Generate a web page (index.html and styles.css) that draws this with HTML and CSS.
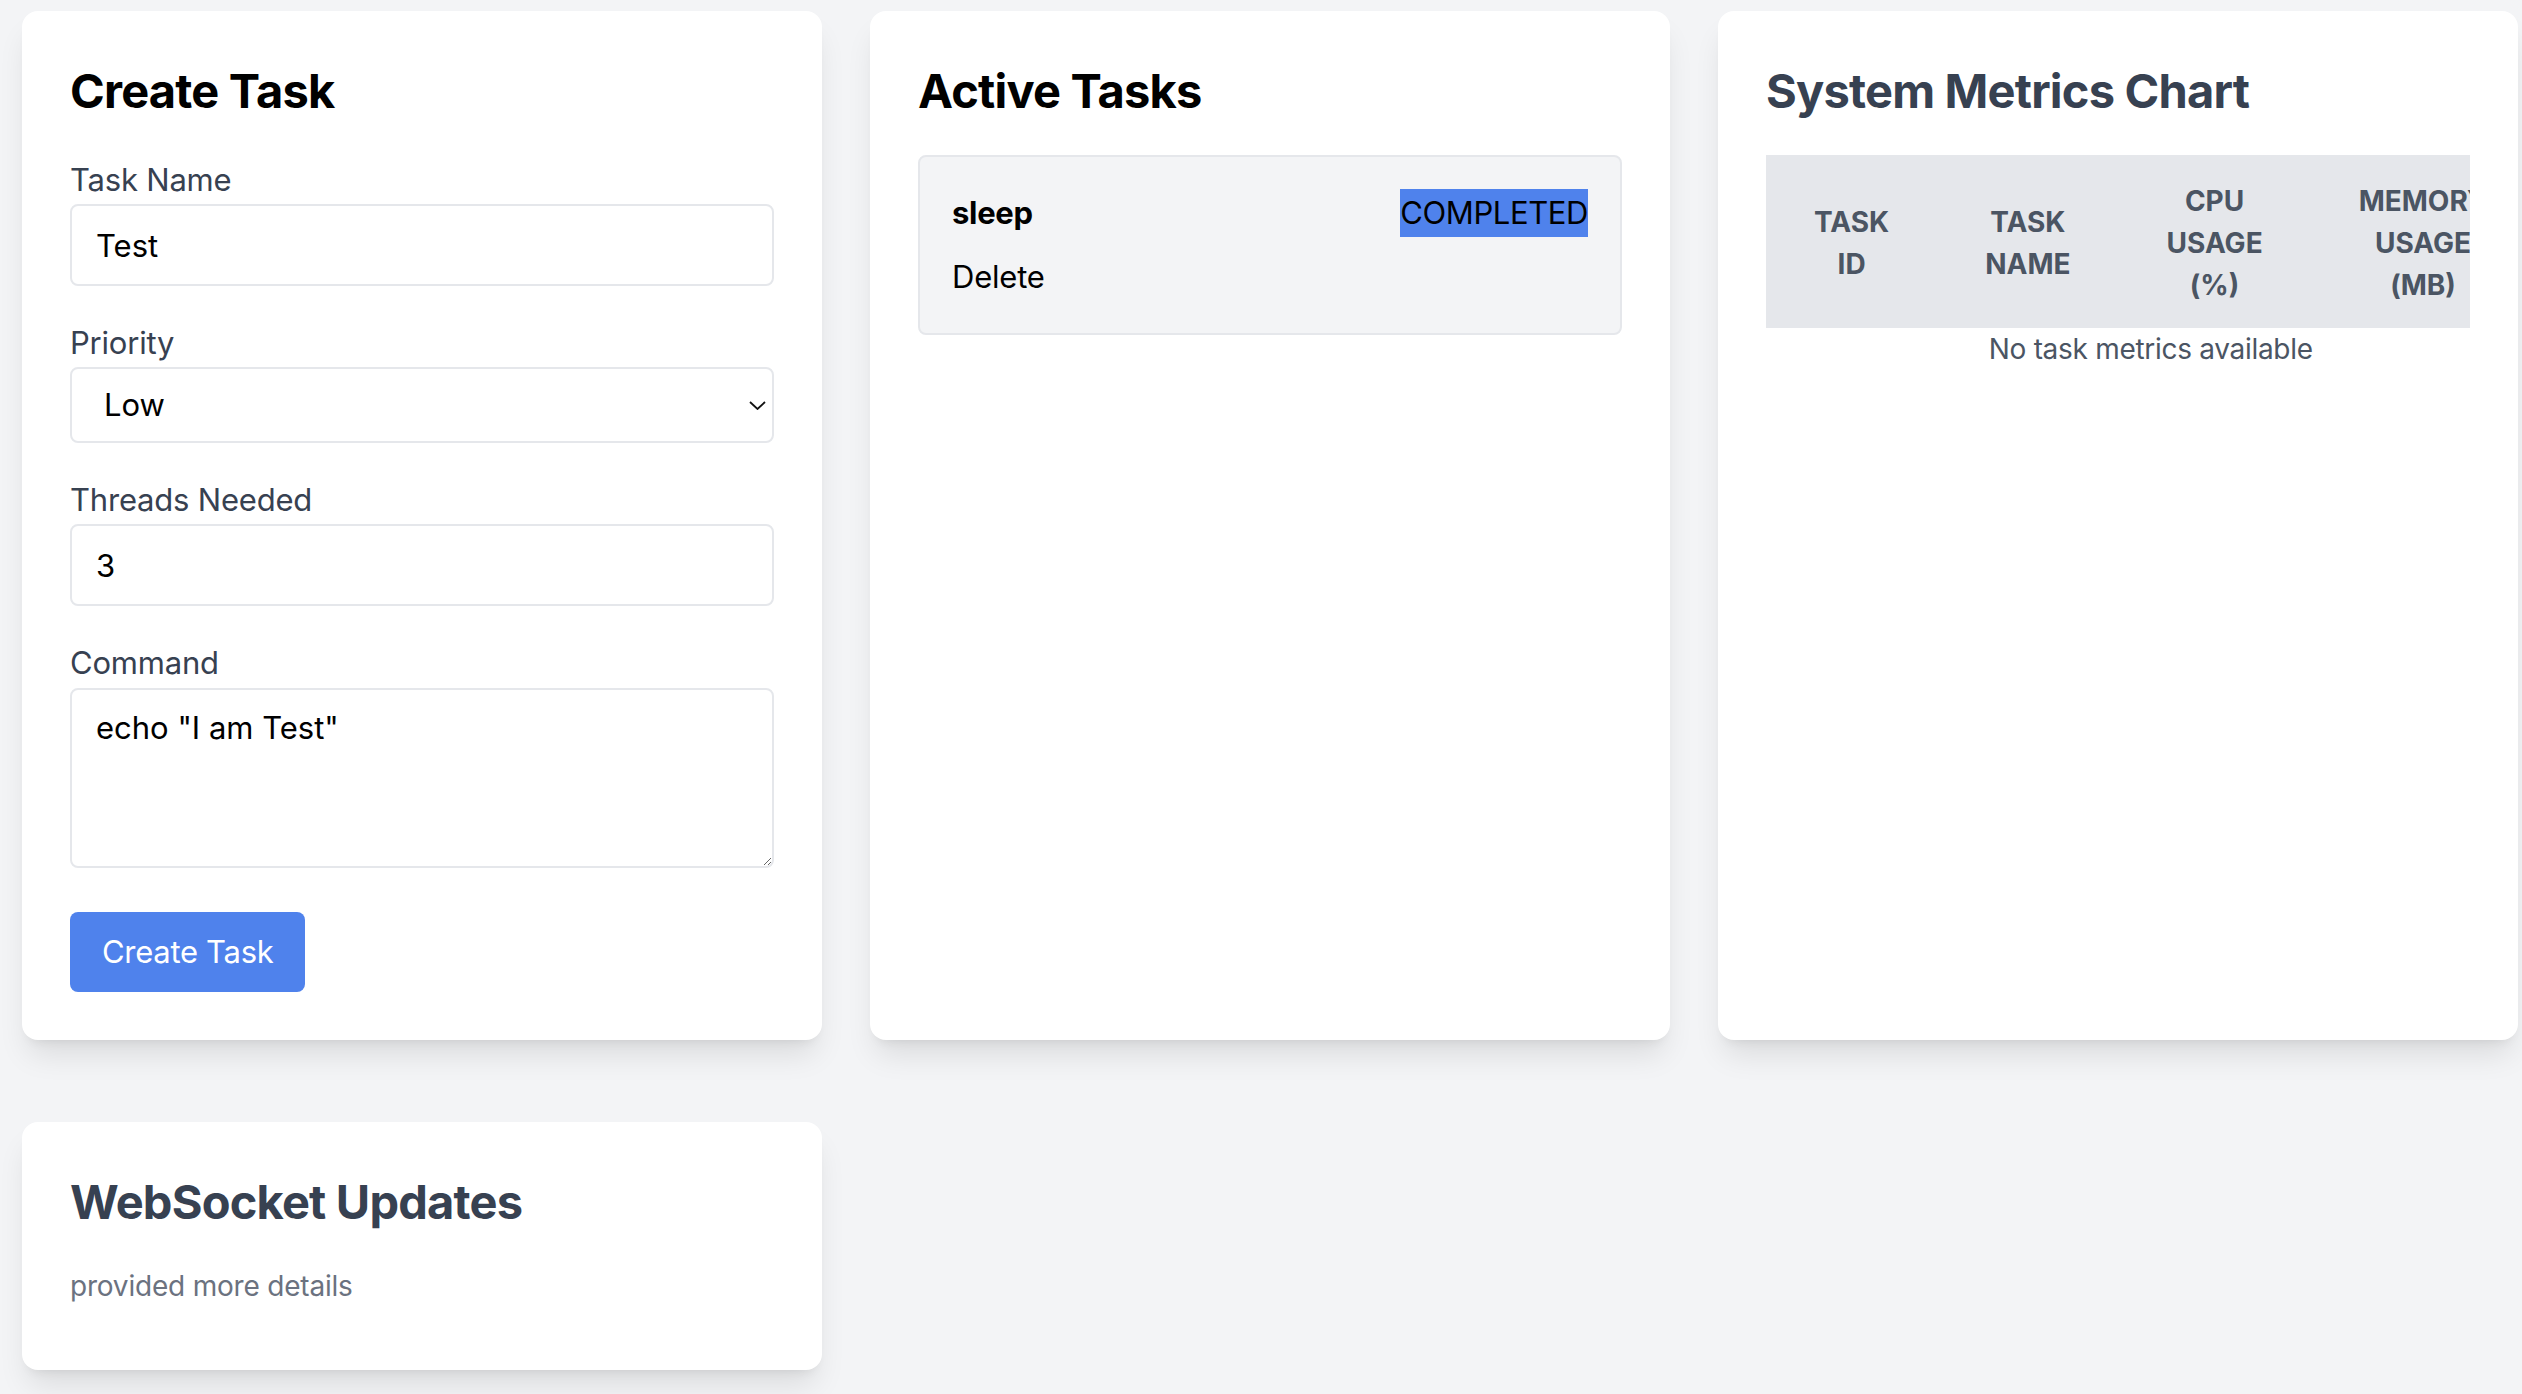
FILE: index.html
```html
<!DOCTYPE html>
<html lang="en">
<head>
<meta charset="utf-8">
<title>Task Dashboard</title>
<link rel="stylesheet" href="styles.css">
</head>
<body>
<main class="page">
  <div class="grid">
    <section class="card">
      <h2 class="title title-black">Create Task</h2>
      <form class="form">
        <label class="label">Task Name</label>
        <input class="field" type="text" value="Test">
        <label class="label">Priority</label>
        <div class="select-wrap">
          <select class="field select">
            <option>Low</option>
            <option>Medium</option>
            <option>High</option>
          </select>
          <svg class="chevron" width="17" height="9" viewBox="0 0 17 9"><path d="M1 1 L8.5 8 L16 1" fill="none" stroke="#111" stroke-width="1.8"/></svg>
        </div>
        <label class="label">Threads Needed</label>
        <input class="field" type="text" value="3">
        <label class="label">Command</label>
        <textarea class="field area">echo "I am Test"</textarea>
        <div class="actions"><button type="button" class="btn">Create Task</button></div>
      </form>
    </section>

    <section class="card">
      <h2 class="title title-black">Active Tasks</h2>
      <div class="task">
        <div class="task-row">
          <span class="task-name">sleep</span>
          <span class="status">COMPLETED</span>
        </div>
        <div class="task-delete">Delete</div>
      </div>
    </section>

    <section class="card">
      <h2 class="title">System Metrics Chart</h2>
      <div class="table-wrap">
        <table class="metrics">
          <thead>
            <tr>
              <th>Task ID</th>
              <th>Task Name</th>
              <th>CPU Usage (%)</th>
              <th>Memory Usage (MB)</th>
            </tr>
          </thead>
          <tbody>
            <tr><td colspan="4" class="empty">No task metrics available</td></tr>
          </tbody>
        </table>
      </div>
    </section>
  </div>

  <section class="card ws-card">
    <h2 class="title">WebSocket Updates</h2>
    <p class="ws-text">provided more details</p>
  </section>
</main>
</body>
</html>
```

FILE: styles.css
```css
* { box-sizing: border-box; }

html, body {
  margin: 0;
  padding: 0;
  background: #f3f4f6;
  font-family: Inter, "Noto Sans", "Liberation Sans", sans-serif;
  color: #000;
}

.page {
  padding: 11px 5px 40px 22px;
}

.grid {
  display: grid;
  grid-template-columns: repeat(3, 800px);
  column-gap: 48px;
  align-items: stretch;
}

.card {
  background: #fff;
  border-radius: 16px;
  box-shadow: 0 20px 30px -6px rgba(0, 0, 0, 0.1), 0 8px 12px -8px rgba(0, 0, 0, 0.1);
  padding: 48px;
}

.title {
  margin: 0 0 32px 0;
  font-size: 47px;
  line-height: 64px;
  font-weight: 700;
  color: #374151;
  letter-spacing: -0.8px;
}

.title-black { color: #000; }

.form {
  display: flex;
  flex-direction: column;
}

.label {
  display: block;
  font-size: 31px;
  line-height: 49px;
  color: #374151;
  letter-spacing: -0.2px;
}

.field {
  display: block;
  width: 100%;
  height: 82px;
  margin: 0 0 32px 0;
  padding: 0 24px;
  border: 2px solid #e5e7eb;
  border-radius: 8px;
  background: #fff;
  font-family: inherit;
  font-size: 31px;
  line-height: 48px;
  color: #000;
  outline: none;
}

.select-wrap {
  position: relative;
  margin: 0 0 32px 0;
}

.select {
  appearance: none;
  -webkit-appearance: none;
  margin: 0;
  height: 76px;
  padding: 0 60px 0 32px;
}

.chevron {
  position: absolute;
  right: 8px;
  top: 34px;
  width: 17px;
  height: 9px;
  pointer-events: none;
}

.area {
  height: 180px;
  resize: vertical;
  padding: 14px 24px;
  margin-top: 1px;
  margin-bottom: 44px;
}

.actions { display: flex; }

.btn {
  background: #4f82ec;
  color: #fff;
  border: none;
  border-radius: 8px;
  padding: 16px 32px;
  font-family: inherit;
  font-size: 31px;
  line-height: 48px;
  cursor: pointer;
  letter-spacing: -0.3px;
}

.task {
  background: #f3f4f6;
  border: 2px solid #e5e7eb;
  border-radius: 8px;
  padding: 32px;
}

.task-row {
  display: flex;
  justify-content: space-between;
  align-items: center;
}

.task-name {
  font-size: 31px;
  line-height: 48px;
  font-weight: 700;
  letter-spacing: -0.3px;
}

.status {
  background: #4f82ec;
  font-size: 31px;
  line-height: 48px;
  color: #000;
  letter-spacing: -0.4px;
}

.task-delete {
  margin-top: 16px;
  font-size: 31px;
  line-height: 48px;
  letter-spacing: -0.2px;
}

.table-wrap {
  overflow: hidden;
}

.metrics {
  border-collapse: collapse;
  width: 1px;
}

.metrics th {
  background: #e5e7eb;
  color: #4b5563;
  font-size: 28px;
  line-height: 42px;
  font-weight: 700;
  text-transform: uppercase;
  padding: 25px 48px 22px;
  text-align: center;
  letter-spacing: 0;
}

.empty {
  text-align: center;
  font-size: 28px;
  line-height: 40px;
  color: #4b5563;
  padding: 1px 0 7px;
  white-space: nowrap;
  letter-spacing: -0.3px;
}

.ws-card {
  width: 800px;
  margin-top: 82px;
  padding-bottom: 64px;
}

.ws-text {
  margin: 0;
  font-size: 28px;
  line-height: 40px;
  color: #6b7280;
  letter-spacing: -0.2px;
}
```
